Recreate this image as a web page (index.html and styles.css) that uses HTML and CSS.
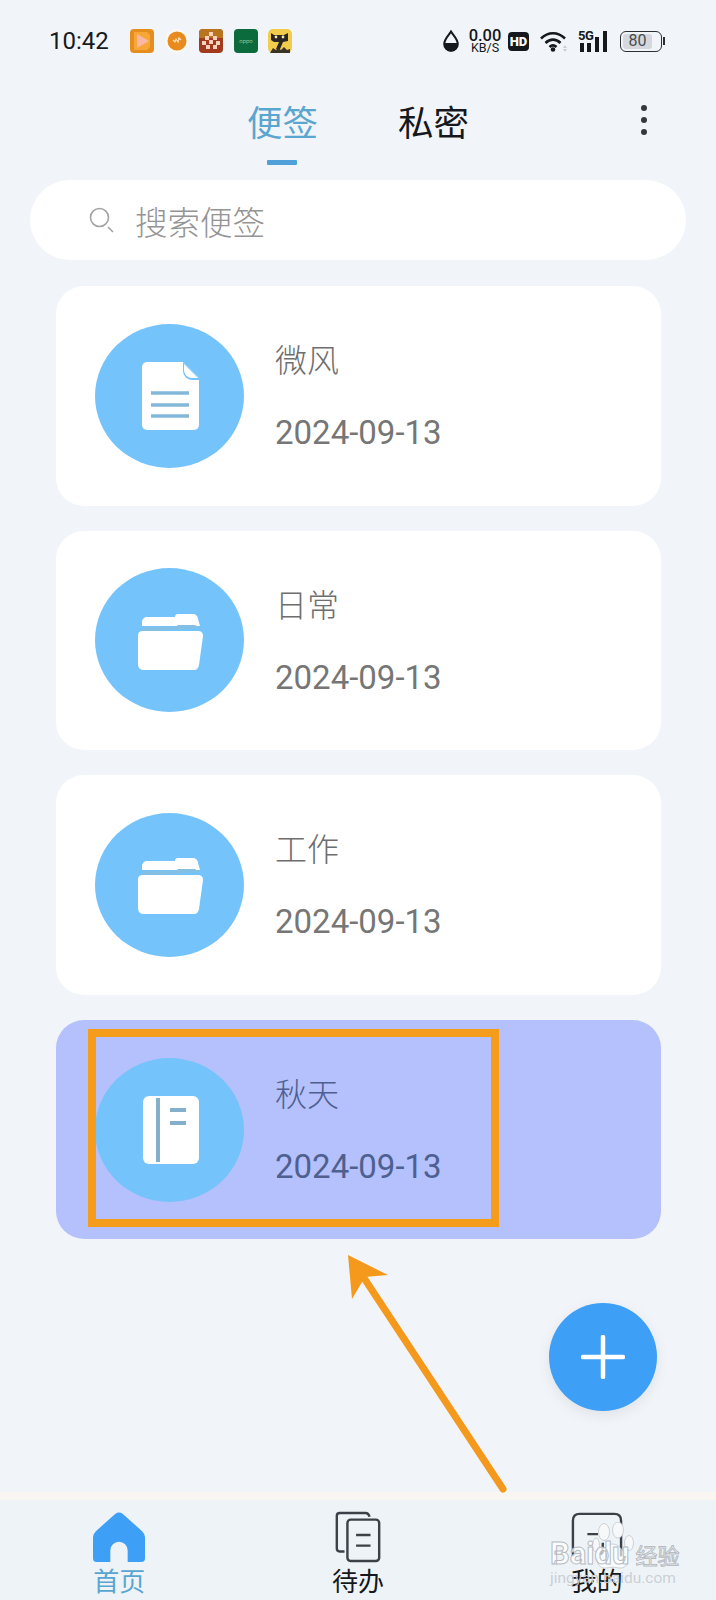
FILE: index.html
```html
<!DOCTYPE html>
<html lang="zh-CN">
<head>
    <meta charset="UTF-8">
    <meta name="viewport" content="width=device-width, initial-scale=1.0">
    <title>便签</title>
    <link rel="stylesheet" href="styles.css">
</head>
<body>
    <div class="page">
        <!-- 状态栏 -->
        <div class="status-bar">
            <span class="time">10:42</span>
            <div class="app-icons">
                <svg class="app-icon" viewBox="0 0 24 24"><rect width="24" height="24" rx="4" fill="#e58e1e"/><path d="M4 3h13l3 3v12l-3 3H4z" fill="#f9a638"/><path d="M7 5l12 7-12 7z" fill="#f9b7a5"/></svg>
                <svg class="app-icon" viewBox="0 0 24 24"><circle cx="12" cy="12" r="12" fill="#fbf8f2"/><circle cx="12" cy="12" r="9.500" fill="#e98a1e"/><path d="M8 11l2 2 1-3 2 3 1-4 2 2" fill="none" stroke="#fbe2b8" stroke-width="1.200"/></svg>
                <svg class="app-icon" viewBox="0 0 24 24"><rect width="24" height="24" rx="4" fill="#a3391f"/><path d="M0 4q0-4 4-4h16q4 0 4 4v5H0z" fill="#b8741e"/><g fill="#fbd0bc"><rect x="10" y="3" width="4" height="4"/><rect x="6" y="7" width="4" height="4"/><rect x="14" y="7" width="4" height="4"/><rect x="10" y="11" width="4" height="4"/><rect x="3" y="12" width="4" height="4"/><rect x="17" y="12" width="4" height="4"/><rect x="7" y="16" width="4" height="4"/><rect x="14" y="16" width="4" height="4"/></g></svg>
                <svg class="app-icon" viewBox="0 0 24 24"><rect width="24" height="24" rx="4" fill="#0b6b3c"/><text x="12" y="14" class="oppo-text" text-anchor="middle">oppo</text></svg>
                <svg class="app-icon" viewBox="0 0 24 24"><rect width="24" height="24" rx="5" fill="#f2cd4b"/><path d="M3 4l3 2h10l4-2v8l-5 1-3 7-4 0 3-7H6l-3-2z" fill="#2a2622"/><path d="M2 24l3-5 3 2 2-2 3 2 3-3 3 3 3-1v4z" fill="#3a3428"/><circle cx="8" cy="8" r="1.400" fill="#f6e9b0"/><circle cx="15" cy="8" r="1.400" fill="#f6e9b0"/></svg>
            </div>
            <div class="sys-icons">
                <svg class="drop-icon" viewBox="0 0 16 22"><path d="M8 1.500C6 5 1.200 9 1.200 14a6.800 6.800 0 0 0 13.600 0C14.800 9 10 5 8 1.500z" fill="none" stroke="#15181c" stroke-width="2"/><path d="M1.500 13h13v2a6.500 6.500 0 0 1-13 0z" fill="#15181c"/></svg>
                <div class="net-speed"><span class="net-num">0.00</span><span class="net-unit">KB/S</span></div>
                <span class="hd-badge">HD</span>
                <svg class="wifi-icon" viewBox="0 0 28 22"><path d="M1 8.500C8 1.500 18 1.500 25 8.500M5.500 13C10 8.500 16 8.500 20.500 13M9.500 17c2.200-2 4.800-2 7 0" fill="none" stroke="#15181c" stroke-width="2.600"/><circle cx="13" cy="19.500" r="2.300" fill="#15181c"/><path d="M25 15l2 3h-4zM25 22l2-3h-4z" fill="#c9ced3"/></svg>
                <div class="signal">
                    <span class="signal-label">5G</span>
                    <svg class="signal-icon" viewBox="0 0 30 21"><rect x="2" y="12" width="4" height="9" fill="#15181c"/><rect x="9" y="12" width="4" height="9" fill="#15181c"/><rect x="17" y="6" width="4" height="15" fill="#15181c"/><rect x="25" y="0" width="4" height="21" fill="#15181c"/></svg>
                </div>
                <div class="battery"><span class="battery-level">80</span></div>
                <span class="battery-nub"></span>
            </div>
        </div>

        <!-- 顶部标签 -->
        <div class="top-tabs">
            <div class="tabs">
                <div class="tab active">便签<span class="tab-line"></span></div>
                <div class="tab">私密</div>
            </div>
            <div class="more"><span></span><span></span><span></span></div>
        </div>

        <div class="search">
            <svg class="search-icon" viewBox="0 0 26 26"><circle cx="10.500" cy="10.500" r="9" fill="none" stroke="#a3a3a3" stroke-width="1.600"/><path d="M19 20l5 5" stroke="#a3a3a3" stroke-width="1.600" fill="none"/></svg>
            <span>搜索便签</span>
        </div>

        <div class="note-list">
            <div class="note-card">
                <div class="note-circle">
                    <svg class="note-icon doc" viewBox="0 0 57 68"><path d="M5 0h36l16 16v47a5 5 0 0 1-5 5H5a5 5 0 0 1-5-5V5a5 5 0 0 1 5-5z" fill="#fff"/><path d="M41 0l16 16V18H50a9 9 0 0 1-9-9z" fill="#75c3fb"/><path d="M42 2v6a8 8 0 0 0 8 8h6z" fill="#fff"/><path d="M9 31h38M9 43h38M9 54h38" stroke="#84b8da" stroke-width="3.500"/></svg>
                </div>
                <div class="note-text">
                    <div class="note-title">微风</div>
                    <div class="note-date">2024-09-13</div>
                </div>
            </div>
            <div class="note-card">
                <div class="note-circle">
                    <svg class="note-icon folder" viewBox="0 0 65 56"><path d="M4 12V8a5 5 0 0 1 5-5h28V3a3 3 0 0 1 3-3h15a5 5 0 0 1 5 5l2 7z" fill="#fff"/><path d="M4 18q0-5 5-5h29l2-2h17l5 3z" fill="#84bfe4"/><path d="M0 21q0-4 5-4h55q5 0 5 5l-4 29q-1 5-5 5H6q-6 0-6-6z" fill="#fff"/></svg>
                </div>
                <div class="note-text">
                    <div class="note-title">日常</div>
                    <div class="note-date">2024-09-13</div>
                </div>
            </div>
            <div class="note-card">
                <div class="note-circle">
                    <svg class="note-icon folder" viewBox="0 0 65 56"><path d="M4 12V8a5 5 0 0 1 5-5h28V3a3 3 0 0 1 3-3h15a5 5 0 0 1 5 5l2 7z" fill="#fff"/><path d="M4 18q0-5 5-5h29l2-2h17l5 3z" fill="#84bfe4"/><path d="M0 21q0-4 5-4h55q5 0 5 5l-4 29q-1 5-5 5H6q-6 0-6-6z" fill="#fff"/></svg>
                </div>
                <div class="note-text">
                    <div class="note-title">工作</div>
                    <div class="note-date">2024-09-13</div>
                </div>
            </div>
            <div class="note-card selected">
                <div class="note-circle">
                    <svg class="note-icon book" viewBox="0 0 56 68"><rect width="56" height="68" rx="6" fill="#fff"/><path d="M15 2v64" stroke="#84b0cc" stroke-width="4"/><path d="M27 14h16M27 27h16" stroke="#84b0cc" stroke-width="4"/></svg>
                </div>
                <div class="note-text">
                    <div class="note-title">秋天</div>
                    <div class="note-date">2024-09-13</div>
                </div>
            </div>
        </div>

        <div class="bottom-nav">
            <div class="nav-item active">
                <svg class="nav-icon" viewBox="0 0 54 52"><path d="M23 2q4-3 8 0l20 18q3 3 3 6v22q0 4-4 4H36V40a9 9 0 0 0-18 0v12H4q-4 0-4-4V26q0-3 3-6z" fill="#3d9ff5"/></svg>
                <span>首页</span>
            </div>
            <div class="nav-item">
                <svg class="nav-icon" viewBox="0 0 54 52"><path d="M13 41H8q-3 0-3-3V4q0-3 3-3h27q3 0 4 4" fill="none" stroke="#3c4148" stroke-width="2.500"/><rect x="16" y="8" width="33" height="43" rx="3.500" fill="none" stroke="#3c4148" stroke-width="2.500"/><path d="M25 24h15M25 35h15" stroke="#3c4148" stroke-width="2.500"/></svg>
                <span>待办</span>
            </div>
            <div class="nav-item">
                <svg class="nav-icon" viewBox="0 0 54 52"><path d="M2 46V9q0-7 7-7h36q7 0 7 7v37" fill="none" stroke="#3c4148" stroke-width="2.500"/><path d="M17 23h11M31 23h5M33 32v8q0 3-3 4" fill="none" stroke="#3c4148" stroke-width="2.500"/></svg>
                <span>我的</span>
            </div>
        </div>

        <div class="fab">
            <svg class="fab-plus" viewBox="0 0 44 44"><path d="M22 2v40M2 22h40" stroke="#fff" stroke-width="4.500" stroke-linecap="round"/></svg>
        </div>

        <!-- 截图上的标注 -->
        <div class="mark-box"></div>
        <svg class="mark-arrow" viewBox="0 0 716 1600"><path d="M503 1489L364 1278" stroke="#f4991c" stroke-width="7" stroke-linecap="round"/><path d="M348 1255l40 20-23 2-13 22z" fill="#f4991c"/></svg>

        <div class="watermark">
            <svg class="paw" viewBox="0 0 42 50"><g fill="#f6f8fa" stroke="#c4c8cd" stroke-width="0.800"><ellipse cx="12" cy="10" rx="5.500" ry="8.500"/><ellipse cx="26" cy="8" rx="5.500" ry="8"/><ellipse cx="4" cy="23" rx="3.500" ry="7"/><ellipse cx="37" cy="21" rx="4.500" ry="7.500"/></g><path d="M20 22c-7 0-9 7-13 11-4 6 0 14 7 13 5-1 9-1 13 0 8 1 11-7 7-13-4-4-6-11-14-11z" fill="rgba(255,255,255,.65)" stroke="#c4c8cd" stroke-width="0.800"/></svg>
            <div class="wm-logo">Baidu<span class="wm-cn">经验</span></div>
            <div class="wm-url">jingyan.baidu.com</div>
        </div>
    </div>
</body>
</html>
```

FILE: styles.css
```css
* {
    box-sizing: border-box;
}
body {
    margin: 0;
    font-family: "Noto Sans CJK SC", Roboto, sans-serif;
    font-weight: 300;
    background-color: #f1f5f9;
}
.page {
    position: relative;
    width: 716px;
    height: 1600px;
    display: flex;
    flex-direction: column;
    overflow: hidden;
    background-color: #f1f5f9;
}

/* status bar */
.status-bar {
    height: 82px;
    display: flex;
    align-items: center;
    padding-left: 49px;
}
.time {
    width: 81px;
    font-family: Roboto, sans-serif;
    font-size: 24px;
    font-weight: 400;
    color: #17191c;
}
.app-icons {
    display: flex;
    gap: 10.500px;
}
.app-icon {
    width: 24px;
    height: 24px;
}
.oppo-text {
    font-family: Roboto, sans-serif;
    font-size: 6px;
    fill: #bfe0c8;
}
.sys-icons {
    display: flex;
    align-items: center;
    margin-left: 151px;
}
.drop-icon {
    width: 16px;
    height: 22px;
}
.net-speed {
    display: flex;
    flex-direction: column;
    align-items: center;
    width: 36px;
    margin-left: 8px;
    font-family: Roboto, sans-serif;
    color: #15181c;
}
.net-num {
    font-size: 16.500px;
    font-weight: 500;
    line-height: 12px;
}
.net-unit {
    font-size: 12.500px;
    font-weight: 400;
    line-height: 11px;
}
.hd-badge {
    width: 21px;
    height: 19px;
    margin-left: 5px;
    border-radius: 4px;
    background-color: #15181c;
    color: #fff;
    font-family: Roboto, sans-serif;
    font-size: 13px;
    font-weight: 900;
    line-height: 19px;
    text-align: center;
}
.wifi-icon {
    width: 28px;
    height: 22px;
    margin-left: 11px;
}
.signal {
    position: relative;
    width: 30px;
    height: 21px;
    margin-left: 10px;
}
.signal-label {
    position: absolute;
    left: 0;
    top: -1px;
    font-family: Roboto, sans-serif;
    font-size: 13px;
    font-weight: 700;
    line-height: 11px;
    letter-spacing: -0.5px;
    color: #15181c;
}
.signal-icon {
    display: block;
    width: 30px;
    height: 21px;
}
.battery {
    width: 42px;
    height: 21px;
    margin-left: 12px;
    padding: 2px;
    border: 1.500px solid #2c3036;
    border-radius: 6px;
}
.battery-level {
    display: block;
    width: 80%;
    height: 100%;
    border-radius: 3px;
    background-color: #d5d8dc;
    font-family: Roboto, sans-serif;
    font-size: 16px;
    font-weight: 400;
    line-height: 14px;
    text-align: center;
    color: #4a4d52;
}
.battery-nub {
    width: 2px;
    height: 8px;
    margin-left: 1px;
    background-color: #2c3036;
}

/* tabs */
.top-tabs {
    position: relative;
    height: 98px;
    display: flex;
    justify-content: center;
}
.tabs {
    display: flex;
    gap: 80px;
}
.tab {
    display: flex;
    flex-direction: column;
    align-items: center;
    font-size: 35.500px;
    font-weight: 400;
    line-height: 78px;
    color: #15181c;
}
.tab.active {
    color: #5aa6cf;
}
.tab-line {
    width: 30px;
    height: 5px;
    border-radius: 1px;
    background-color: #4f9fd8;
}
.more {
    position: absolute;
    left: 641px;
    top: 23px;
    display: flex;
    flex-direction: column;
    gap: 6px;
}
.more span {
    width: 6px;
    height: 6px;
    border-radius: 50%;
    background-color: #33383e;
}

/* search */
.search {
    height: 80px;
    margin: 0 30px;
    display: flex;
    align-items: center;
    padding-left: 59px;
    gap: 20px;
    border-radius: 40px;
    background-color: #fff;
    font-size: 32.500px;
    color: #949494;
}
.search-icon {
    width: 26px;
    height: 26px;
}

/* notes */
.note-list {
    margin: 26px 55px 0 56px;
    display: flex;
    flex-direction: column;
    gap: 25px;
}
.note-card {
    height: 219.600px;
    display: flex;
    align-items: center;
    padding-left: 39px;
    gap: 31px;
    border-radius: 28px;
    background-color: #fff;
}
.note-card.selected {
    background-color: #b4c1fd;
}
.note-circle {
    width: 149px;
    height: 144px;
    display: flex;
    align-items: center;
    justify-content: center;
    border-radius: 50%;
    background-color: #75c3fb;
}
.note-icon.doc {
    width: 57px;
    height: 68px;
    margin-left: 2px;
    margin-top: 1px;
}
.note-icon.folder {
    width: 65px;
    height: 56px;
    margin-top: 3px;
    margin-left: 2px;
}
.note-icon.book {
    width: 56px;
    height: 68px;
    margin-left: 2px;
}
.note-text {
    display: flex;
    flex-direction: column;
    gap: 25px;
    color: #6e6e6e;
}
.note-title {
    font-size: 32px;
    line-height: 50px;
}
.note-date {
    font-family: Roboto, sans-serif;
    font-size: 33px;
    font-weight: 400;
    line-height: 50px;
    color: #767676;
}
.selected .note-text,
.selected .note-date {
    color: #4f5f90;
}

/* bottom nav */
.bottom-nav {
    margin-top: auto;
    height: 108px;
    display: grid;
    grid-template-columns: repeat(3, 1fr);
    padding-top: 11px;
    border-top: 8px solid #f9f5f1;
    background-color: #eef3f8;
}
.nav-item {
    display: flex;
    flex-direction: column;
    align-items: center;
    font-size: 26px;
    font-weight: 400;
    line-height: 34px;
    color: #15181c;
}
.nav-item.active {
    color: #58a6cf;
}
.nav-icon {
    width: 52px;
    height: 52px;
}
.fab {
    position: absolute;
    left: 549px;
    top: 1303px;
    width: 108px;
    height: 108px;
    display: flex;
    align-items: center;
    justify-content: center;
    border-radius: 50%;
    background-color: #3d9ff5;
    box-shadow: 0 4px 14px rgba(0, 0, 0, 0.08);
}
.fab-plus {
    width: 44px;
    height: 44px;
}

/* annotations */
.mark-box {
    position: absolute;
    left: 88px;
    top: 1029px;
    width: 411px;
    height: 198px;
    border: 8px solid #f59c1a;
}
.mark-arrow {
    position: absolute;
    left: 0;
    top: 0;
    width: 716px;
    height: 1600px;
}
.watermark {
    position: absolute;
    left: 548px;
    top: 1522px;
    width: 132px;
    height: 64px;
}
.paw {
    position: absolute;
    left: 44px;
    top: 0;
    width: 42px;
    height: 50px;
}
.wm-logo {
    position: absolute;
    left: 2px;
    top: 14px;
    font-family: Roboto, sans-serif;
    font-size: 31px;
    font-weight: 700;
    line-height: 36px;
    white-space: nowrap;
    color: rgba(255, 255, 255, 0.75);
    -webkit-text-stroke: 1px rgba(175, 180, 186, 0.9);
}
.wm-cn {
    margin-left: 6px;
    font-family: "Noto Sans CJK SC", sans-serif;
    font-size: 22px;
    font-weight: 400;
}
.wm-url {
    position: absolute;
    left: 2px;
    top: 49px;
    font-family: Roboto, sans-serif;
    font-size: 15.500px;
    font-weight: 400;
    line-height: 15px;
    white-space: nowrap;
    color: rgba(200, 205, 210, 0.95);
}
```
